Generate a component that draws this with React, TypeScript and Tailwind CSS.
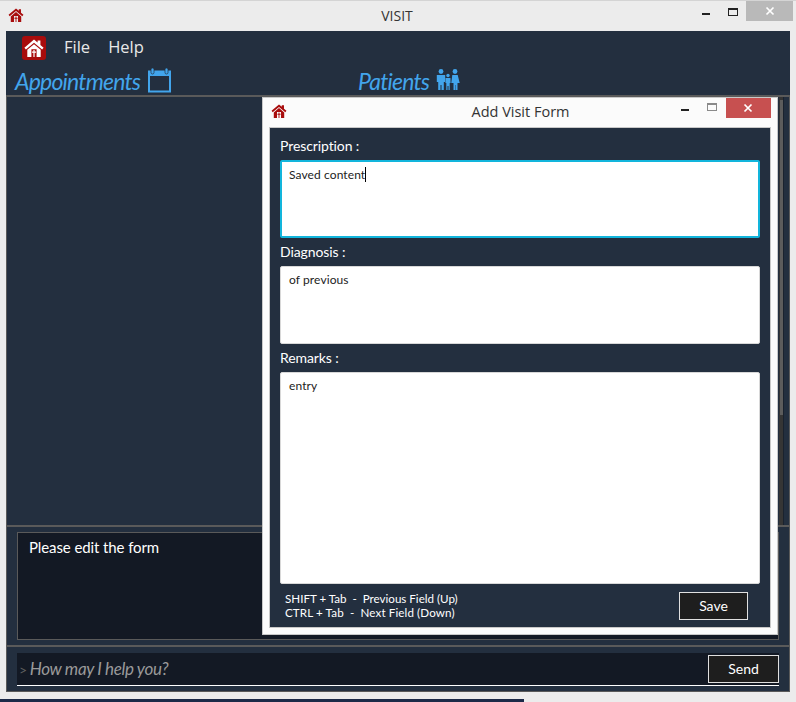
import React from 'react';

const gill = "font-['Lato','Noto_Sans',sans-serif]";

// house with chimney and a cross on the door
const HomeIcon = ({ className }: { className: string }) => (
  <svg viewBox="0 0 20 18" className={className} fill="currentColor">
    <path d="M10 .6.4 8.8l1.5 1.7L10 3.7l8.1 6.8 1.5-1.7L16.4 6V1.6h-2.8v2z" />
    <path fillRule="evenodd" d="M10 5.2l6.7 5.6V18H3.3v-7.200zM7.400 10.200V18h5.200v-7.800z" />
    <path d="M9.400 11h1.200v1.500h1.400v1.200h-1.400V18H9.400v-4.300H8v-1.200h1.400z" />
  </svg>
);

const CalendarIcon = () => (
  <svg width="23" height="26" viewBox="0 0 23 26" className="text-[#42a5ec]">
    <rect x="1" y="4.500" width="21" height="20" fill="none" stroke="currentColor" strokeWidth="2" />
    <rect x="0" y="4" width="23" height="5" fill="currentColor" />
    <rect x="3" y="1" width="3" height="6" rx="1.500" fill="currentColor" stroke="#232f3f" strokeWidth="0.7" />
    <rect x="17" y="1" width="3" height="6" rx="1.500" fill="currentColor" stroke="#232f3f" strokeWidth="0.7" />
  </svg>
);

const FamilyIcon = () => (
  <svg width="24" height="21" viewBox="0 0 24 21" fill="#42a5ec">
    <circle cx="5" cy="2.500" r="2.400" />
    <path d="M.8 6h8.400v7H7.800v8H5.500v-5h-1v5H2.200v-8H.8z" />
    <circle cx="12" cy="6.500" r="1.700" />
    <path d="M9.500 9h5v5h-.8v7h-1.200v-4h-1v4h-1.200v-7h-.8z" />
    <circle cx="19" cy="2.500" r="2.400" />
    <path d="M16.300 6h5.400l2 8h-2.200v7h-1.800v-5h-.4v5h-1.800v-7h-2.200z" />
  </svg>
);

const WindowButtons = ({ modal }: { modal?: boolean }) => (
  <div className="flex items-start">
    <div className={`flex justify-center ${modal ? 'w-[26px] pt-[11px]' : 'w-[27px] pt-[12px]'}`}>
      <div className="h-[2px] w-[8px] bg-[#222]" />
    </div>
    <div className={`flex justify-center ${modal ? 'w-[28px] pt-[5px]' : 'w-[27px] pt-[7px]'}`}>
      <div className={`h-[8px] w-[10px] border border-t-2 ${modal ? 'border-[#8a8a8a]' : 'border-[#222]'}`} />
    </div>
    <div className={`flex h-[20px] items-center justify-center text-white ${modal ? 'w-[45px] bg-[#c75050]' : 'w-[47px] bg-[#b9b9b9]'}`}>
      <svg width="10" height="10" viewBox="0 0 10 10" stroke="currentColor" strokeWidth="1.7">
        <path d="M1.500 1.500l7 7M8.500 1.500l-7 7" />
      </svg>
    </div>
  </div>
);

const Field = ({ label, value, height, active }: { label: string; value: string; height: string; active?: boolean }) => (
  <div>
    <div className="mb-[4px] h-[21px] text-[14px] leading-[21px] tracking-[-0.1px] text-white">{label}</div>
    <div
      className={`${height} rounded-[2px] bg-white text-[12px] leading-[18px] tracking-[0.1px] text-[#222] ${
        active ? 'border-2 border-[#12b5dc] px-[7px] py-[1.500px]' : 'border border-[#d8d8d8] px-[8px] py-[4px]'
      }`}
    >
      {value}
      {active && <span className="inline-block h-[15px] w-px translate-y-[3px] bg-black" />}
    </div>
  </div>
);

const App: React.FC = () => {
  return (
    <div className="relative h-[702px] w-[796px] overflow-hidden bg-[#ececec]">
      {/* main window title bar */}
      <div className="flex h-[31px] items-start justify-between border-t border-[#d4d4d4] pl-[8px] pr-[3px]">
        <HomeIcon className="mt-[7px] h-[14px] w-[16px] text-[#a80c0c]" />
        <div className="ml-[78px] pt-[5px] font-['Open_Sans',sans-serif] text-[14px] leading-[19px] text-[#333]">VISIT</div>
        <WindowButtons />
      </div>

      <div className="mx-[6px] flex h-[661px] flex-col bg-[#232f3f]">
        {/* menu */}
        <div className="flex h-[33px] items-center pl-[16px] font-['Open_Sans',sans-serif] text-[16.500px] leading-[22px] text-[#e8e8e8]">
          <div className="flex h-[24px] w-[24px] items-center justify-center rounded-[3px] bg-[#a80c0c]">
            <HomeIcon className="h-[18px] w-[20px] text-white" />
          </div>
          <span className="ml-[18px] -translate-y-[1px]">File</span>
          <span className="ml-[18px] -translate-y-[1px]">Help</span>
        </div>

        {/* section links */}
        <div className={`flex h-[31px] items-center text-[23px] italic tracking-[-0.8px] text-[#42a5ec] ${gill}`}>
          <div className="flex w-[352px] items-center gap-[8px] pl-[9px]">
            <span className="translate-y-[2px]">Appointments</span>
            <CalendarIcon />
          </div>
          <div className="flex items-center gap-[7px]">
            <span className="translate-y-[2px]">Patients</span>
            <FamilyIcon />
          </div>
        </div>

        <div className="flex flex-1 flex-col border-x border-b border-[#5a5a5a]">
          <div className="h-[2px] bg-[#5a5a5a]" />
          <div className="flex h-[428px] justify-end pr-[5px]">
            <div className="w-[5px] border-r border-[#1a222e] bg-[#353535]">
              <div className="ml-[1px] mt-[3px] h-[315px] w-[3px] bg-[#5c5c5c]" />
            </div>
          </div>
          <div className="h-[2px] bg-[#5a5a5a]" />

          {/* log */}
          <div className={`mx-[10px] mt-[5px] h-[108px] border border-[#5a5a5a] bg-[#131924] px-[11px] py-[4px] text-[15px] leading-[20px] tracking-[-0.1px] text-white ${gill}`}>
            Please edit the form
          </div>
          <div className="mt-[5px] h-[2px] bg-[#5a5a5a]" />

          {/* prompt */}
          <div className="mx-[10px] mt-[6px] flex h-[33px] items-center justify-between border-b border-white bg-[#131924] pl-[2px]">
            <div className={`flex items-center gap-[3px] text-[17px] italic tracking-[-0.35px] text-[#9a9a9a] ${gill}`}>
              <span className="text-[14px] not-italic text-[#5f5f5f]">&gt;</span>
              <span>How may I help you?</span>
            </div>
            <button className={`h-[28px] w-[71px] border border-[#e0e0e0] bg-[#1e1e1e] pb-[2px] text-[14px] text-white ${gill}`}>Send</button>
          </div>
        </div>
      </div>

      {/* desktop showing under the window */}
      <div className="absolute bottom-0 left-0 h-[3px] w-[524px] bg-[#1c2a48]" />

      {/* Add Visit Form dialog */}
      <div className="absolute left-[262px] top-[97px] flex h-[538px] w-[516px] flex-col border border-[#c8c8c8] bg-[#fbfbfb] px-[6px] pb-[6px]">
        <div className="flex h-[29px] items-start justify-between">
          <HomeIcon className="mt-[6px] ml-[2px] h-[14px] w-[16px] text-[#a80c0c]" />
          <div className="ml-[82px] pt-[4px] font-['Open_Sans',sans-serif] text-[14.500px] leading-[20px] text-[#333]">Add Visit Form</div>
          <WindowButtons modal />
        </div>
        <div className={`flex flex-1 flex-col border border-[#c8c8c8] bg-[#232f3f] px-[10px] pt-[7px] ${gill}`}>
          <Field label="Prescription :" value="Saved content" height="h-[78px]" active />
          <div className="mt-[3px]">
            <Field label="Diagnosis :" value="of previous" height="h-[78px]" />
          </div>
          <div className="mt-[3px]">
            <Field label="Remarks :" value="entry" height="h-[212px]" />
          </div>
          <div className="mt-[3px] flex items-start justify-between pl-[5px] pr-[12px]">
            <div className="pt-[5px] text-[11.600px] leading-[14px] text-white">
              <div>SHIFT + Tab&nbsp; -&nbsp; Previous Field (Up)</div>
              <div className="tracking-[0.12px]">CTRL + Tab&nbsp; -&nbsp; Next Field (Down)</div>
            </div>
            <button className="mt-[5px] h-[28px] w-[69px] border border-[#e0e0e0] bg-[#1e1e1e] pb-[2px] text-[14px] text-white">Save</button>
          </div>
        </div>
      </div>
    </div>
  );
};

export default App;
